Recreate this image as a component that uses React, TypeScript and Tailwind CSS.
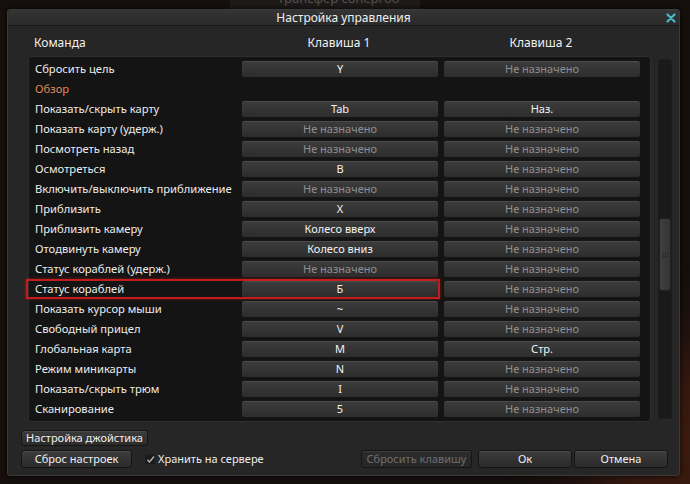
import React from 'react';

interface Binding {
  label: string;
  key1?: string;
  key2?: string;
  section?: boolean;
  selected?: boolean;
}

const NONE = 'Не назначено';

const bindings: Binding[] = [
  { label: 'Сбросить цель', key1: 'Y' },
  { label: 'Обзор', section: true },
  { label: 'Показать/скрыть карту', key1: 'Tab', key2: 'Наз.' },
  { label: 'Показать карту (удерж.)' },
  { label: 'Посмотреть назад' },
  { label: 'Осмотреться', key1: 'B' },
  { label: 'Включить/выключить приближение' },
  { label: 'Приблизить', key1: 'X' },
  { label: 'Приблизить камеру', key1: 'Колесо вверх' },
  { label: 'Отодвинуть камеру', key1: 'Колесо вниз' },
  { label: 'Статус кораблей (удерж.)' },
  { label: 'Статус кораблей', key1: 'Б', selected: true },
  { label: 'Показать курсор мыши', key1: '~' },
  { label: 'Свободный прицел', key1: 'V' },
  { label: 'Глобальная карта', key1: 'M', key2: 'Стр.' },
  { label: 'Режим миникарты', key1: 'N' },
  { label: 'Показать/скрыть трюм', key1: 'I' },
  { label: 'Сканирование', key1: '5' },
];

const KeyButton: React.FC<{ value?: string }> = ({ value }) => (
  <div
    className={`flex h-[18px] w-[198px] items-center justify-center whitespace-nowrap rounded-[3px] border border-[#151515] bg-gradient-to-b from-[#3c3c3c] to-[#2d2d2d] shadow-[inset_0_1px_0_rgba(255,255,255,0.08)] ${
      value ? 'text-[#f2f2f2]' : 'text-[#8e8e8e]'
    }`}
  >
    {value || NONE}
  </div>
);

const Button: React.FC<{ children: React.ReactNode; className?: string; disabled?: boolean }> = ({
  children,
  className = '',
  disabled,
}) => (
  <div
    className={`flex items-center justify-center whitespace-nowrap rounded-[3px] border border-[#141414] bg-gradient-to-b shadow-[inset_0_1px_0_rgba(255,255,255,0.08)] ${
      disabled ? 'from-[#2c2c2c] to-[#262626] text-[#6f6f6f]' : 'from-[#3c3c3c] to-[#2b2b2b] text-[#f0f0f0]'
    } ${className}`}
  >
    {children}
  </div>
);

const App: React.FC = () => {
  return (
    <div
      className="relative h-[484px] w-[690px] overflow-hidden bg-[#160f0e] text-[11px] leading-4"
      style={{ fontFamily: '"Noto Sans", "DejaVu Sans", sans-serif' }}
    >
      {/* game scene behind the dialog */}
      <div className="absolute left-[230px] top-0 h-[9px] w-[190px] bg-[#1e1b1a]" />
      <div className="absolute left-[278px] top-[-10px] text-[13px] text-[#55514f]">трансфер сонергоо</div>
      <div className="absolute bottom-[-60px] right-[-60px] h-[200px] w-[160px] rounded-full bg-[#5a2410] opacity-60 blur-2xl" />

      <div className="relative ml-[7px] mt-[9px] flex h-[467px] w-[673px] flex-col rounded-[3px] border border-[#3a3a3a] bg-[#262626] shadow-[0_0_6px_rgba(0,0,0,0.8)]">
        {/* title */}
        <div className="relative flex h-[16px] items-center justify-center border-b border-[#161616] bg-gradient-to-b from-[#343434] to-[#2a2a2a] text-[12px] text-[#f0f0f0]">
          Настройка управления
          <svg className="absolute right-[3px] top-[3px]" width="10" height="10" viewBox="0 0 10 10">
            <path d="M1.5 1.5 L8.5 8.5 M8.5 1.5 L1.5 8.5" stroke="#47b8cc" strokeWidth="2.2" strokeLinecap="round" />
          </svg>
        </div>

        {/* column headers */}
        <div className="flex h-[30px] items-end pb-[5px] pl-[20px] text-[12px] text-[#f0f0f0]">
          <div className="w-[212px] pl-[6px]">Команда</div>
          <div className="w-[198px] text-center">Клавиша 1</div>
          <div className="w-1" />
          <div className="w-[198px] text-center">Клавиша 2</div>
        </div>

        {/* list */}
        <div className="flex pl-[20px]">
          <div className="h-[366px] w-[623px] rounded-[3px] border border-[#2e2e2e] bg-[#141414] pt-[2px]">
            {bindings.map((b) => (
              <div key={b.label} className="relative flex h-5 items-center">
                {b.selected && (
                  <div className="absolute left-[-3px] top-0 h-[20px] w-[414px] border-2 border-[#c21d1d] shadow-[0_0_3px_rgba(200,30,30,0.6)]" />
                )}
                <div
                  className={`w-[212px] whitespace-nowrap pl-[6px] text-[11.2px] ${
                    b.section ? 'text-[#df8a5a]' : 'text-[#ececec]'
                  }`}
                >
                  {b.label}
                </div>
                {!b.section && (
                  <>
                    <KeyButton value={b.key1} />
                    <div className="w-1" />
                    <KeyButton value={b.key2} />
                  </>
                )}
              </div>
            ))}
          </div>
          <div className="ml-[7px] mt-[3px] flex h-[360px] w-[14px] flex-col rounded-[3px] border border-[#1d1d1d] bg-[#1a1a1a]">
            <div className="h-[158px]" />
            <div className="flex h-[73px] items-center justify-center rounded-[3px] border border-[#222] bg-gradient-to-r from-[#3f3f3f] to-[#353535]">
              <div className="grid grid-cols-3 gap-[1px] opacity-60">
                {Array.from({ length: 9 }).map((_, i) => (
                  <div key={i} className="h-[1px] w-[1px] bg-[#111]" />
                ))}
              </div>
            </div>
          </div>
        </div>

        {/* footer */}
        <Button className="ml-[13px] mt-[8px] h-[16px] w-[127px]">Настройка джойстика</Button>
        <div className="mt-[4px] flex h-[18px] items-center pl-[13px] pr-[11px]">
          <Button className="h-[18px] w-[111px]">Сброс настроек</Button>
          <div className="ml-[13px] flex items-center whitespace-nowrap text-[#ececec]">
            <div className="mr-[3px] flex h-[10px] w-[10px] items-center justify-center rounded-[1px] bg-[#1c1c1c]">
              <svg width="9" height="9" viewBox="0 0 9 9">
                <path d="M1.5 4.8 L3.5 7 L8 1.5" stroke="#b8b8b8" strokeWidth="1.3" fill="none" />
              </svg>
            </div>
            Хранить на сервере
          </div>
          <Button disabled className="ml-auto h-[18px] w-[111px]">
            Сбросить клавишу
          </Button>
          <Button className="ml-[6px] h-[18px] w-[94px]">Ок</Button>
          <Button className="ml-[2px] h-[18px] w-[94px]">Отмена</Button>
        </div>
      </div>
    </div>
  );
};

export default App;
